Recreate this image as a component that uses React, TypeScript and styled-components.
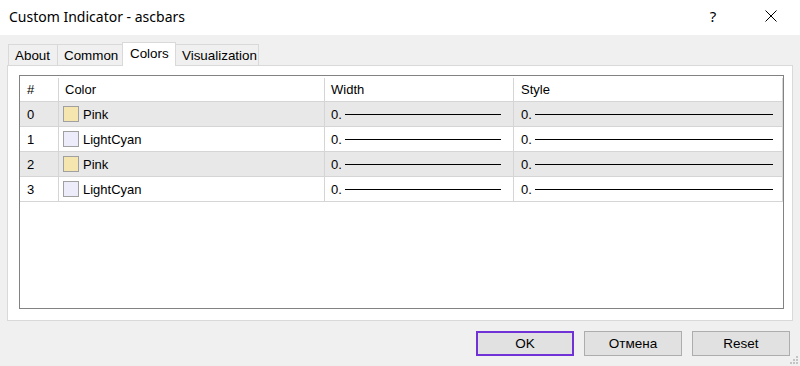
import React from "react";
import styled, { createGlobalStyle } from "styled-components";

const GlobalStyle = createGlobalStyle`
  html, body {
    margin: 0;
    padding: 0;
    background: #f0f0f0;
  }
  * {
    box-sizing: border-box;
  }
`;

//window
const Window = styled.div`
  position: relative;
  width: 800px;
  height: 366px;
  display: flex;
  flex-direction: column;
  background: #f0f0f0;
  font-family: "Liberation Sans", Arial, sans-serif;
  font-size: 13px;
  color: #000;
  overflow: hidden;
`;

//title bar
const TitleBar = styled.div`
  height: 35px;
  flex: none;
  display: flex;
  align-items: center;
  padding: 0 0 3px 9px;
  background: #fff;
`;
const Title = styled.span`
  flex: 1;
  font-family: "Noto Sans", "Open Sans", sans-serif;
  font-size: 14px;
  color: #000;
`;
const CaptionButton = styled.div`
  width: 58px;
  height: 32px;
  display: flex;
  align-items: center;
  justify-content: center;
  font-family: "Noto Sans", sans-serif;
  font-size: 15px;
  color: #000;
`;

//body
const Body = styled.div`
  flex: 1;
  display: flex;
  flex-direction: column;
  padding: 8px 7px 0 7px;
`;

//tabs
const TabStrip = styled.div`
  height: 23px;
  display: flex;
  align-items: flex-end;
  padding-left: 2px;
  margin-bottom: -1px;
  position: relative;
  z-index: 1;
`;
const Tab = styled.div<{ $active?: boolean; $w: number }>`
  width: ${(p) => p.$w}px;
  height: ${(p) => (p.$active ? "24px" : "22px")};
  display: flex;
  align-items: center;
  padding: ${(p) => (p.$active ? "0 0 2px 7px" : "1px 0 0 6px")};
  border: 1px solid #d9d9d9;
  border-bottom: ${(p) => (p.$active ? "none" : "1px solid #d9d9d9")};
  margin-left: -1px;
  background: ${(p) => (p.$active ? "#fff" : "#f0f0f0")};
  font-size: 13.4px;
  white-space: nowrap;
`;

//panel
const Panel = styled.div`
  height: 256px;
  display: flex;
  border: 1px solid #d9d9d9;
  background: #fff;
  padding: 9px 8px 11px 11px;
`;

//list view
const Table = styled.div`
  flex: 1;
  border: 1px solid #828282;
  display: flex;
  flex-direction: column;
  background: #fff;
`;
const Row = styled.div<{ $shade?: boolean; $header?: boolean }>`
  height: ${(p) => (p.$header ? "26px" : "25px")};
  display: flex;
  padding-top: ${(p) => (p.$header ? "2px" : "0")};
  border-bottom: 1px solid #d5d5d5;
  background: ${(p) => (p.$shade ? "#e8e8e8" : "#fff")};
`;
const Cell = styled.div<{ $w: number; $pad?: number }>`
  width: ${(p) => p.$w}px;
  flex: none;
  display: flex;
  align-items: center;
  padding-left: ${(p) => p.$pad ?? 6}px;
  border-right: 1px solid #d5d5d5;
  white-space: nowrap;
  overflow: hidden;
`;
const Swatch = styled.span<{ $color: string }>`
  width: 16px;
  height: 16px;
  flex: none;
  margin: 0 4px 0 -2px;
  border: 1px solid #a0a0a0;
  background: ${(p) => p.$color};
`;
const LineValue = styled.span`
  margin-right: 3px;
`;
const Line = styled.span<{ $right: number }>`
  flex: 1;
  height: 1px;
  margin-right: ${(p) => p.$right}px;
  background: #000;
`;

//footer
const Footer = styled.div`
  display: flex;
  justify-content: flex-end;
  gap: 10px;
  padding: 10px 3px 0 0;
`;
const Button = styled.button<{ $default?: boolean }>`
  width: 98px;
  height: 25px;
  font-family: "Liberation Sans", Arial, sans-serif;
  font-size: 13.5px;
  color: #000;
  background: #e1e1e1;
  border: ${(p) => (p.$default ? "2px solid #7031d6" : "1px solid #adadad")};
  padding: 0;
`;
const Grip = styled.svg`
  position: absolute;
  right: 1px;
  bottom: 1px;
`;

const tabs = [
  { label: "About", w: 50 },
  { label: "Common", w: 66 },
  { label: "Colors", w: 54 },
  { label: "Visualization", w: 84 },
];

const rows = [
  { id: 0, name: "Pink", color: "#f4e6ae" },
  { id: 1, name: "LightCyan", color: "#ececfb" },
  { id: 2, name: "Pink", color: "#f4e6ae" },
  { id: 3, name: "LightCyan", color: "#ececfb" },
];

export default function App() {
  return (
    <>
      <GlobalStyle />
      <Window>
        <TitleBar>
          <Title>Custom Indicator - ascbars</Title>
          <CaptionButton>?</CaptionButton>
          <CaptionButton>
            <svg width="12" height="12" viewBox="0 0 12 12">
              <path d="M0.5 0.5 L11.5 11.5 M11.5 0.5 L0.5 11.5" stroke="#000" strokeWidth="1" fill="none" />
            </svg>
          </CaptionButton>
        </TitleBar>
        <Body>
          <TabStrip>
            {tabs.map((t) => (
              <Tab key={t.label} $w={t.w} $active={t.label === "Colors"}>
                {t.label}
              </Tab>
            ))}
          </TabStrip>
          <Panel>
            <Table>
              <Row $header>
                <Cell $w={39} $pad={7}>#</Cell>
                <Cell $w={266}>Color</Cell>
                <Cell $w={189}>Width</Cell>
                <Cell $w={269} $pad={7}>Style</Cell>
              </Row>
              {rows.map((r) => (
                <Row key={r.id} $shade={r.id % 2 === 0}>
                  <Cell $w={39} $pad={7}>{r.id}</Cell>
                  <Cell $w={266}>
                    <Swatch $color={r.color} />
                    {r.name}
                  </Cell>
                  <Cell $w={189}>
                    <LineValue>0.</LineValue>
                    <Line $right={12} />
                  </Cell>
                  <Cell $w={269} $pad={7}>
                    <LineValue>0.</LineValue>
                    <Line $right={9} />
                  </Cell>
                </Row>
              ))}
            </Table>
          </Panel>
          <Footer>
            <Button $default>OK</Button>
            <Button>Отмена</Button>
            <Button>Reset</Button>
          </Footer>
        </Body>
        <Grip width="9" height="9" viewBox="0 0 9 9">
          <rect x="6" y="0" width="2" height="2" fill="#c4c4c4" />
          <rect x="3" y="3" width="2" height="2" fill="#c4c4c4" />
          <rect x="6" y="3" width="2" height="2" fill="#c4c4c4" />
          <rect x="0" y="6" width="2" height="2" fill="#c4c4c4" />
          <rect x="3" y="6" width="2" height="2" fill="#c4c4c4" />
          <rect x="6" y="6" width="2" height="2" fill="#c4c4c4" />
        </Grip>
      </Window>
    </>
  );
}
